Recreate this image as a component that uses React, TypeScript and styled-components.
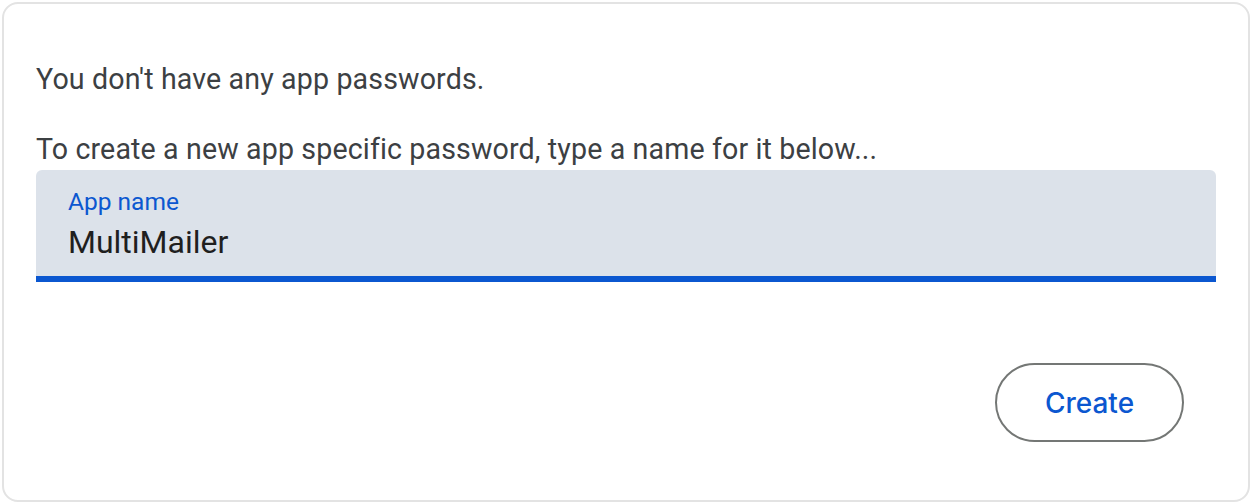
import React from 'react';
import styled, { createGlobalStyle } from 'styled-components';

const GlobalStyle = createGlobalStyle`
  html, body {
    margin: 0;
    padding: 0;
    background: #ffffff;
  }
  body {
    font-family: Roboto, "Liberation Sans", sans-serif;
  }
`;

const Page = styled.div`
  width: 1252px;
  height: 504px;
  padding: 2px;
  box-sizing: border-box;
`;

const Card = styled.section`
  height: 100%;
  box-sizing: border-box;
  border: 2px solid #e3e3e3;
  border-radius: 16px;
  padding: 55px 32px 0 32px;
  display: flex;
  flex-direction: column;
`;

const Message = styled.p`
  margin: 0;
  font-size: 28.6px;
  line-height: 40px;
  letter-spacing: 0.13px;
  color: #3c4043;
`;

const Spacer = styled.div`
  height: 30px;
`;

const Field = styled.label`
  display: flex;
  flex-direction: column;
  height: 112px;
  margin-top: 1px;
  box-sizing: border-box;
  background: #dce2ea;
  border-radius: 6px 6px 0 0;
  border-bottom: 6px solid #0b57d0;
  padding: 18px 32px 0 32px;
`;

const FieldLabel = styled.span`
  font-size: 24.5px;
  line-height: 28px;
  color: #0b57d0;
`;

const FieldInput = styled.input`
  border: none;
  background: transparent;
  outline: none;
  padding: 0;
  margin-top: 8px;
  font-family: Roboto, "Liberation Sans", sans-serif;
  font-size: 32px;
  line-height: 36px;
  color: #1f1f1f;
`;

const Actions = styled.div`
  display: flex;
  justify-content: flex-end;
  padding: 81px 32px 0 0;
`;

const OutlineButton = styled.button`
  width: 189px;
  height: 79px;
  border: 2px solid #747775;
  border-radius: 40px;
  background: #ffffff;
  color: #0b57d0;
  font-family: Inter, Roboto, sans-serif;
  font-size: 28px;
  font-weight: 500;
  cursor: pointer;
`;

export default function App() {
  return (
    <Page>
      <GlobalStyle />
      <Card>
        <Message>You don't have any app passwords.</Message>
        <Spacer />
        <Message>To create a new app specific password, type a name for it below...</Message>
        <Field>
          <FieldLabel>App name</FieldLabel>
          <FieldInput defaultValue="MultiMailer" />
        </Field>
        <Actions>
          <OutlineButton>Create</OutlineButton>
        </Actions>
      </Card>
    </Page>
  );
}
